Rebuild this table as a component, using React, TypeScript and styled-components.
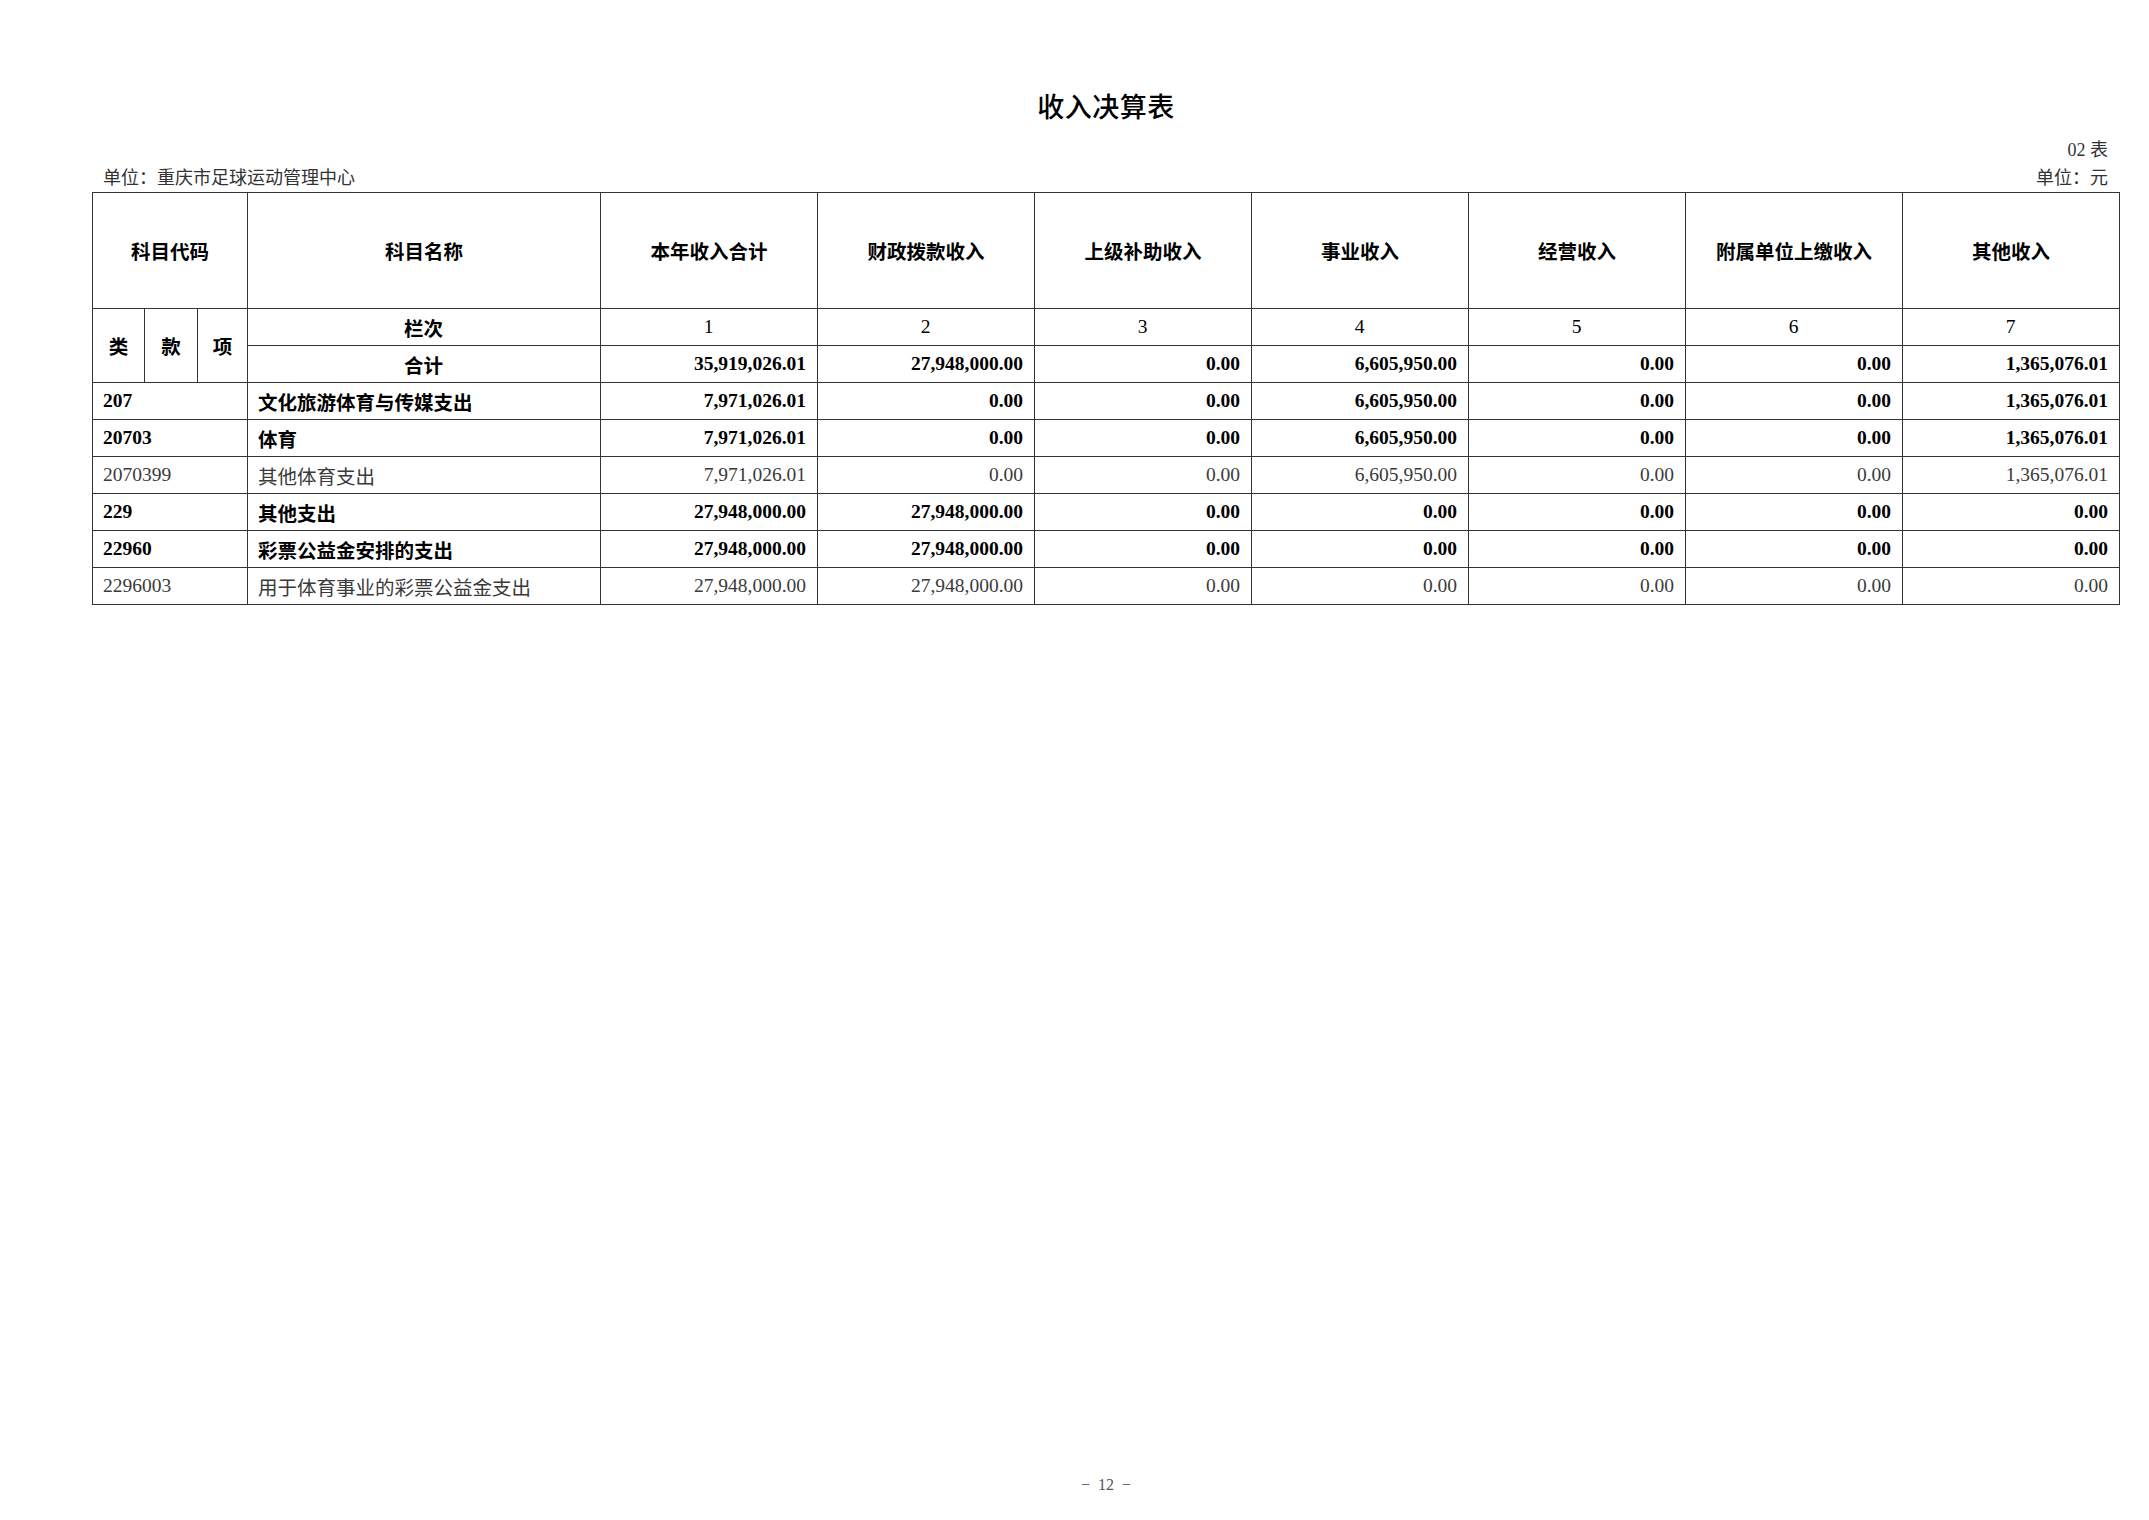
import styled, { createGlobalStyle } from 'styled-components';

const GlobalStyle = createGlobalStyle`
  html, body {
    margin: 0;
    padding: 0;
    background: #ffffff;
  }
`;

const serif = `"Liberation Serif", "Noto Sans CJK SC", serif`;

const Page = styled.div`
  width: 2149px;
  height: 1520px;
  box-sizing: border-box;
  padding: 90px 29px 25px 92px;
  display: flex;
  flex-direction: column;
  background: #ffffff;
  font-family: ${serif};
  color: #000;
`;

const Title = styled.h1`
  margin: 0;
  height: 36px;
  line-height: 36px;
  text-align: center;
  font-size: 27px;
  font-weight: 500;
  letter-spacing: 0.5px;
`;

const SheetNo = styled.div`
  margin-top: 12px;
  height: 24px;
  line-height: 24px;
  padding-right: 12px;
  text-align: right;
  font-size: 18px;
  color: #333;
`;

const MetaRow = styled.div`
  margin-top: 4px;
  height: 24px;
  line-height: 24px;
  padding: 0 12px 0 11px;
  display: flex;
  justify-content: space-between;
  font-size: 18px;
  color: #333;
`;

const Table = styled.table`
  margin-top: 2px;
  width: 2028px;
  table-layout: fixed;
  border-collapse: collapse;
  font-size: 19.5px;
`;

const HeadCell = styled.th`
  border: 1px solid #333;
  height: 115px;
  padding: 0;
  text-align: center;
  vertical-align: middle;
  font-family: ${serif};
  font-weight: 600;
  font-size: 19.5px;
`;

const Cell = styled.td<{ $align?: 'left' | 'center' | 'right'; $bold?: boolean; $plain?: boolean }>`
  border: 1px solid #333;
  height: 36px;
  padding: 0 11px 0 10px;
  text-align: ${({ $align }) => $align ?? 'left'};
  vertical-align: middle;
  white-space: nowrap;
  font-weight: ${({ $bold }) => ($bold ? 700 : 400)};
  color: ${({ $bold, $plain }) => ($bold || $plain ? '#000' : '#3a3a3a')};
`;

const SideCell = styled.td`
  border: 1px solid #333;
  padding: 0;
  text-align: center;
  vertical-align: middle;
  font-weight: 600;
`;

const PageNo = styled.div`
  margin-top: auto;
  height: 20px;
  line-height: 20px;
  text-align: center;
  font-size: 16px;
  color: #555;
  word-spacing: 4px;
`;

const headers = ['本年收入合计', '财政拨款收入', '上级补助收入', '事业收入', '经营收入', '附属单位上缴收入', '其他收入'];

const total = ['35,919,026.01', '27,948,000.00', '0.00', '6,605,950.00', '0.00', '0.00', '1,365,076.01'];

const rows: { code: string; name: string; bold: boolean; values: string[] }[] = [
  { code: '207', name: '文化旅游体育与传媒支出', bold: true, values: ['7,971,026.01', '0.00', '0.00', '6,605,950.00', '0.00', '0.00', '1,365,076.01'] },
  { code: '20703', name: '体育', bold: true, values: ['7,971,026.01', '0.00', '0.00', '6,605,950.00', '0.00', '0.00', '1,365,076.01'] },
  { code: '2070399', name: '其他体育支出', bold: false, values: ['7,971,026.01', '0.00', '0.00', '6,605,950.00', '0.00', '0.00', '1,365,076.01'] },
  { code: '229', name: '其他支出', bold: true, values: ['27,948,000.00', '27,948,000.00', '0.00', '0.00', '0.00', '0.00', '0.00'] },
  { code: '22960', name: '彩票公益金安排的支出', bold: true, values: ['27,948,000.00', '27,948,000.00', '0.00', '0.00', '0.00', '0.00', '0.00'] },
  { code: '2296003', name: '用于体育事业的彩票公益金支出', bold: false, values: ['27,948,000.00', '27,948,000.00', '0.00', '0.00', '0.00', '0.00', '0.00'] },
];

export default function App() {
  return (
    <Page>
      <GlobalStyle />
      <Title>收入决算表</Title>
      <SheetNo>02 表</SheetNo>
      <MetaRow>
        <span>单位：重庆市足球运动管理中心</span>
        <span>单位：元</span>
      </MetaRow>
      <Table>
        <colgroup>
          <col style={{ width: 52 }} />
          <col style={{ width: 53 }} />
          <col style={{ width: 50 }} />
          <col style={{ width: 353 }} />
          {headers.map((h) => (
            <col key={h} style={{ width: 217 }} />
          ))}
        </colgroup>
        <thead>
          <tr>
            <HeadCell colSpan={3}>科目代码</HeadCell>
            <HeadCell>科目名称</HeadCell>
            {headers.map((h) => (
              <HeadCell key={h}>{h}</HeadCell>
            ))}
          </tr>
        </thead>
        <tbody>
          <tr>
            <SideCell rowSpan={2}>类</SideCell>
            <SideCell rowSpan={2}>款</SideCell>
            <SideCell rowSpan={2}>项</SideCell>
            <Cell $align="center" $bold>栏次</Cell>
            {headers.map((h, i) => (
              <Cell key={h} $align="center" $plain>
                {i + 1}
              </Cell>
            ))}
          </tr>
          <tr>
            <Cell $align="center" $bold>合计</Cell>
            {total.map((v, i) => (
              <Cell key={i} $align="right" $bold>
                {v}
              </Cell>
            ))}
          </tr>
          {rows.map((r) => (
            <tr key={r.code}>
              <Cell colSpan={3} $bold={r.bold}>{r.code}</Cell>
              <Cell $bold={r.bold}>{r.name}</Cell>
              {r.values.map((v, i) => (
                <Cell key={i} $align="right" $bold={r.bold}>
                  {v}
                </Cell>
              ))}
            </tr>
          ))}
        </tbody>
      </Table>
      <PageNo>− 12 −</PageNo>
    </Page>
  );
}
